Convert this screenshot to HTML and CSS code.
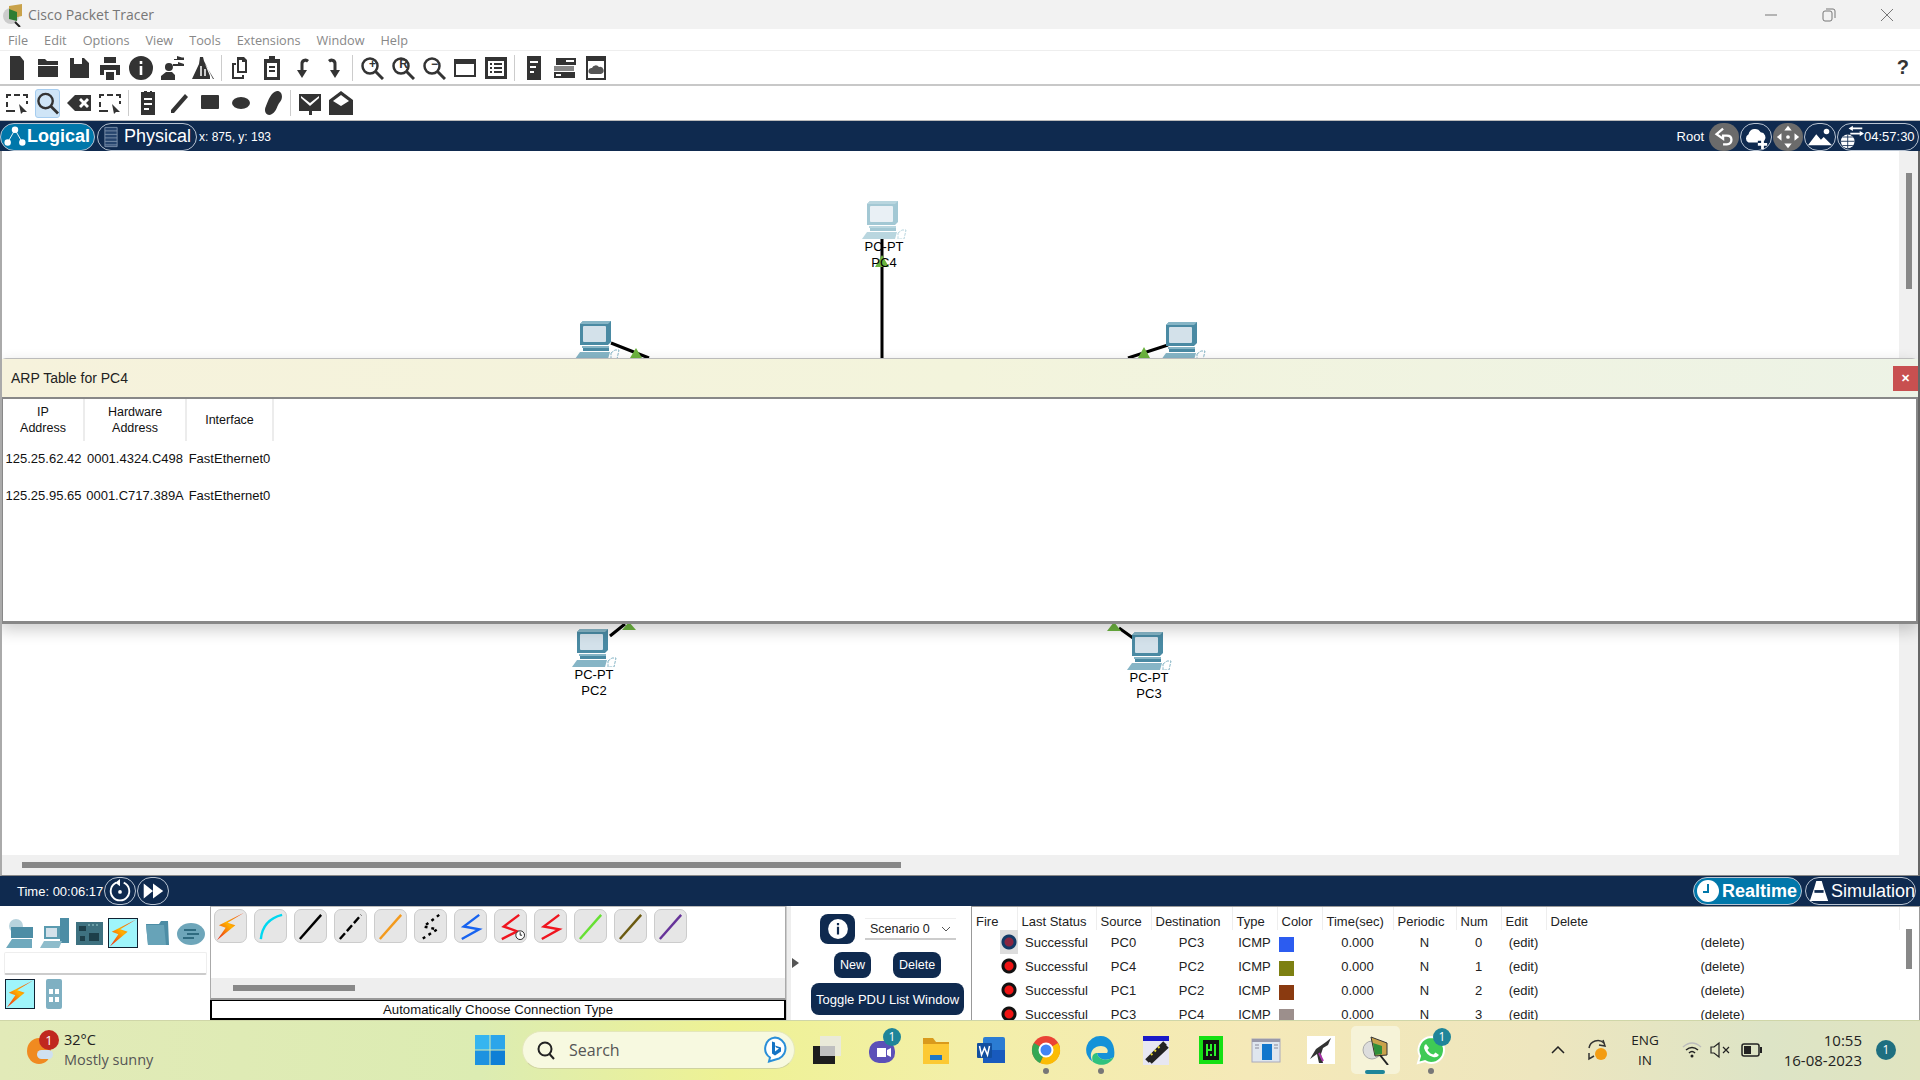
FILE: index.html
```html
<!DOCTYPE html>
<html lang="en">
<head>
    <meta charset="UTF-8">
    <title>Cisco Packet Tracer</title>
    <link rel="stylesheet" href="styles.css">
</head>
<body>
    <svg class="sprite" width="0" height="0">
        <defs>
            <linearGradient id="bolt" x1="0" y1="1" x2="1" y2="0">
                <stop offset="0" stop-color="#e8201a"/>
                <stop offset="0.5" stop-color="#ffb000"/>
                <stop offset="1" stop-color="#e8301a"/>
            </linearGradient>
            <symbol id="i-pc" viewBox="0 0 45 38">
                <path d="M5 3 8 0H36V21L33 24H5Z" fill="var(--pc-main)"/>
                <path d="M5 3 8 0H36L33 3Z" fill="var(--pc-light)"/>
                <rect x="8" y="5" width="23" height="16" rx="1" fill="var(--pc-screen)"/>
                <rect x="7" y="25" width="27" height="2" fill="var(--pc-light)"/>
                <rect x="8" y="27" width="26" height="3" fill="var(--pc-main)"/>
                <path d="M5 31H35L33 38H0Z" fill="var(--pc-light)"/>
                <path d="M36 32 40 29H44L42 38H36Z" fill="none" stroke="var(--pc-light)" stroke-dasharray="3 1"/>
            </symbol>
            <symbol id="i-bolt" viewBox="0 0 30 46" preserveAspectRatio="none">
                <path d="M29 1 12 17 20 21 1 45 10 25 3 21Z" fill="url(#bolt)"/>
            </symbol>
            <symbol id="i-new" viewBox="0 0 24 24"><path d="M5 0H15L19 5V24H5Z"/></symbol>
            <symbol id="i-open" viewBox="0 0 24 24"><path d="M2 3H9L11 5H22V9H2ZM2 10H22V21H2Z"/></symbol>
            <symbol id="i-save" viewBox="0 0 24 24"><path d="M3 2H17L22 7V22H3ZM7 2V8H15V2Z" fill-rule="evenodd"/></symbol>
            <symbol id="i-print" viewBox="0 0 24 24"><path d="M6 1H18V7H6ZM2 9H22V19H18V14H6V19H2ZM8 16H16V24H8Z"/></symbol>
            <symbol id="i-info" viewBox="0 0 24 24"><path d="M12 0A12 12 0 1 0 12 24 12 12 0 0 0 12 0ZM10.700 10H13.300V19H10.700ZM10.700 5H13.300V8H10.700Z" fill-rule="evenodd"/></symbol>
            <symbol id="i-user" viewBox="0 0 24 24"><path d="M9 7A4 4 0 1 1 8.900 15 4 4 0 0 1 9 7ZM1 24V20L6 16H12L15 19V24ZM14 3H17V0L22 1.500H24V4H14ZM13 8H18V6L24 8V10H13Z"/></symbol>
            <symbol id="i-flask" viewBox="0 0 24 24"><path d="M9 1H12L13 5 22 23H1L8 8ZM14 8 19 20V23H23Z"/><path d="M10 10V20M14 13V20" stroke="#fff" stroke-width="1.500"/></symbol>
            <symbol id="i-copy" viewBox="0 0 24 24"><path d="M8 1H15L18 4V17H8ZM10 4V15H16V6H13V4ZM3 7H7V9H5V21H13V19H15V23H3Z" fill-rule="evenodd"/></symbol>
            <symbol id="i-paste" viewBox="0 0 24 24"><path d="M9 0H15V3H20V24H4V3H9ZM7 7V21H17V7ZM9 10H15V12H9ZM9 14H15V16H9Z" fill-rule="evenodd"/></symbol>
            <symbol id="i-undo" viewBox="0 0 24 24"><path d="M6 14 11 22 16 14H12.500V8A2 2 0 0 1 16 6.500L18 4A5 5 0 0 0 9.500 8V14Z"/></symbol>
            <symbol id="i-redo" viewBox="0 0 24 24"><path d="M18 14 13 22 8 14H11.500V8A2 2 0 0 0 8 6.500L6 4A5 5 0 0 1 14.500 8V14Z"/></symbol>
            <symbol id="i-zoom" viewBox="0 0 24 24"><circle cx="10" cy="10" r="7.500" fill="none" stroke="currentColor" stroke-width="2.500"/><path d="M15.500 15.500 23 23" stroke="currentColor" stroke-width="3"/></symbol>
            <symbol id="i-window" viewBox="0 0 24 24"><path d="M1 3H23V21H1ZM3 8V19H21V8Z" fill-rule="evenodd"/></symbol>
            <symbol id="i-list" viewBox="0 0 24 24"><path d="M1 1H23V23H1ZM4 5V20H20V5ZM6 7H8V9H6ZM10 7H18V9H10ZM6 11H8V13H6ZM10 11H18V13H10ZM6 15H8V17H6ZM10 15H18V17H10Z" fill-rule="evenodd"/></symbol>
            <symbol id="i-server" viewBox="0 0 24 24"><path d="M5 0H19V24H5ZM8 5V7H16V5ZM8 10V12H14V10ZM8 15V17H12V15Z" fill-rule="evenodd"/></symbol>
            <symbol id="i-stack" viewBox="0 0 24 24"><path d="M3 2H23V9H3Z"/><path d="M1 10H21V15H1Z" fill="#888"/><path d="M1 16H22V22H1Z"/><path d="M13 4H21V6H13ZM3 18H8V20H3Z" fill="#fff"/></symbol>
            <symbol id="i-cloudbox" viewBox="0 0 24 24"><path d="M2 0H22V24H2ZM4 5V22H20V5Z" fill-rule="evenodd"/><path d="M7 18A3 3 0 0 1 8 12 4 4 0 0 1 15 11 3.500 3.500 0 0 1 17 18Z" fill="#555"/></symbol>
            <symbol id="i-select" viewBox="0 0 24 24"><path d="M1 3H6V5H3V7H1ZM9 3H15V5H9ZM18 3H23V7H21V5H18ZM1 11H3V16H1ZM21 10H23V13H21ZM1 19H10V21H1Z"/><path d="M14 13 22 21 18 21 16 23Z"/></symbol>
            <symbol id="i-erase" viewBox="0 0 24 24"><path d="M8 4H24V20H8L0 12ZM12 9 15 12 12 15 14 17 17 14 20 17 22 15 19 12 22 9 20 7 17 10 14 7Z" fill-rule="evenodd"/></symbol>
            <symbol id="i-note" viewBox="0 0 24 24"><path d="M5 1H8V0H11V1H14V0H16V1H19V24H5ZM8 7V9H16V7ZM8 12V14H16V12ZM8 17V19H13V17Z" fill-rule="evenodd"/></symbol>
            <symbol id="i-pencil" viewBox="0 0 24 24"><path d="M18 3 21 6 7 22 4 22 4 19Z"/></symbol>
            <symbol id="i-rect" viewBox="0 0 24 24"><rect x="3" y="4" width="18" height="14" rx="1"/></symbol>
            <symbol id="i-ellipse" viewBox="0 0 24 24"><ellipse cx="12" cy="12" rx="9" ry="6"/></symbol>
            <symbol id="i-free" viewBox="0 0 24 24"><path d="M17 0C23 0 23 8 20 11 17 14 17 20 12 23 7 26 3 21 6 15 8 10 11 1 17 0Z"/></symbol>
            <symbol id="i-mail" viewBox="0 0 24 24"><path d="M1 3H23V20H14V24H11V20H1ZM3 5 12 12 21 5 21 7 12 15 3 7Z" fill-rule="evenodd"/></symbol>
            <symbol id="i-mailopen" viewBox="0 0 24 24"><path d="M12 0 24 9V24H0V9ZM12 4 4 10 12 15 20 10Z" fill-rule="evenodd"/></symbol>
        </defs>
    </svg>

    <header class="titlebar">
        <svg class="app-logo" viewBox="0 0 24 24">
            <circle cx="10" cy="13" r="8" fill="#ccc"/>
            <path d="M8 3 21 1V13L8 16Z" fill="#c9a24a"/>
            <path d="M8 6 16 9V18L8 16Z" fill="#2f7d32"/>
            <path d="M14 19 19 24" stroke="#222" stroke-width="2"/>
        </svg>
        <span class="title-text">Cisco Packet Tracer</span>
        <div class="win-btns">
            <svg viewBox="0 0 14 14"><path d="M1 7H13"/></svg>
            <svg viewBox="0 0 14 14"><rect x="1" y="3" width="9" height="10" rx="2"/><path d="M4 1H11Q13 1 13 3V10"/></svg>
            <svg viewBox="0 0 14 14"><path d="M1 1 13 13M13 1 1 13"/></svg>
        </div>
    </header>

    <nav class="menubar">
        <span>File</span><span>Edit</span><span>Options</span><span>View</span><span>Tools</span><span>Extensions</span><span>Window</span><span>Help</span>
    </nav>

    <div class="toolbar toolbar-main">
        <span class="tool"><svg><use href="#i-new"/></svg></span>
        <span class="tool"><svg><use href="#i-open"/></svg></span>
        <span class="tool"><svg><use href="#i-save"/></svg></span>
        <span class="tool"><svg><use href="#i-print"/></svg></span>
        <span class="tool"><svg><use href="#i-info"/></svg></span>
        <span class="tool"><svg><use href="#i-user"/></svg></span>
        <span class="tool"><svg><use href="#i-flask"/></svg></span>
        <span class="tool-sep"></span>
        <span class="tool"><svg><use href="#i-copy"/></svg></span>
        <span class="tool"><svg><use href="#i-paste"/></svg></span>
        <span class="tool"><svg><use href="#i-undo"/></svg></span>
        <span class="tool"><svg><use href="#i-redo"/></svg></span>
        <span class="tool-sep"></span>
        <span class="tool"><svg><use href="#i-zoom"/></svg><b class="zoom-mark">+</b></span>
        <span class="tool"><svg><use href="#i-zoom"/></svg><b class="zoom-mark">R</b></span>
        <span class="tool"><svg><use href="#i-zoom"/></svg><b class="zoom-mark">&minus;</b></span>
        <span class="tool"><svg><use href="#i-window"/></svg></span>
        <span class="tool"><svg><use href="#i-list"/></svg></span>
        <span class="tool-sep"></span>
        <span class="tool"><svg><use href="#i-server"/></svg></span>
        <span class="tool"><svg><use href="#i-stack"/></svg></span>
        <span class="tool"><svg><use href="#i-cloudbox"/></svg></span>
        <span class="help-mark">?</span>
    </div>

    <div class="toolbar toolbar-draw">
        <span class="tool"><svg><use href="#i-select"/></svg></span>
        <span class="tool tool-active"><svg><use href="#i-zoom"/></svg></span>
        <span class="tool"><svg><use href="#i-erase"/></svg></span>
        <span class="tool"><svg><use href="#i-select"/></svg></span>
        <span class="tool-sep"></span>
        <span class="tool"><svg><use href="#i-note"/></svg></span>
        <span class="tool"><svg><use href="#i-pencil"/></svg></span>
        <span class="tool"><svg><use href="#i-rect"/></svg></span>
        <span class="tool"><svg><use href="#i-ellipse"/></svg></span>
        <span class="tool"><svg><use href="#i-free"/></svg></span>
        <span class="tool-sep"></span>
        <span class="tool"><svg><use href="#i-mail"/></svg></span>
        <span class="tool"><svg><use href="#i-mailopen"/></svg></span>
    </div>

    <div class="navbar navbar-top">
        <span class="pill pill-on pill-logical">
            <svg viewBox="0 0 24 24"><path d="M12 4 4 18M12 4 20 18" stroke="#fff" stroke-width="1"/><circle cx="12" cy="4" r="3.500"/><circle cx="4" cy="18" r="3.500"/><circle cx="20" cy="18" r="3.500"/></svg>
            Logical
        </span>
        <span class="pill pill-physical">
            <svg viewBox="0 0 16 24"><path d="M1 1H15V23H1ZM1 5H15M1 9H15M1 13H15M1 17H15M1 21H15" fill="#27456e" stroke="#7f93ad"/></svg>
            Physical
        </span>
        <span class="coords">x: 875, y: 193</span>
        <span class="root-label">Root</span>
        <span class="round-btn round-grey">
            <svg viewBox="0 0 30 28"><path d="M14 5 7 11 14 16V12.500H18Q23 12.500 23 17T18 22H14" fill="none" stroke="#fff" stroke-width="2.500"/></svg>
        </span>
        <span class="round-btn round-cloud">
            <svg viewBox="0 0 30 28"><path d="M7 20A5 5 0 0 1 7 11 7 7 0 0 1 20 9 5.500 5.500 0 0 1 24 18H17V20Z" fill="#fff"/><path d="M22 17V27M17 22H27" stroke="#fff" stroke-width="3"/></svg>
        </span>
        <span class="round-btn round-grey">
            <svg viewBox="0 0 30 28"><path d="M15 2 19 7H11ZM15 26 11 21H19ZM3 14 8 10V18ZM27 14 22 18V10Z" fill="#fff"/><circle cx="15" cy="14" r="2" fill="#fff"/></svg>
        </span>
        <span class="round-btn round-cloud">
            <svg viewBox="0 0 30 28"><path d="M2 23 11 11 16 17 19 14 28 23Z" fill="#fff"/><circle cx="22" cy="8" r="3" fill="#fff"/></svg>
        </span>
        <span class="clock-pill">
            <svg viewBox="0 0 28 28"><circle cx="9" cy="19" r="8" fill="#fff"/><path d="M1 19H17M9 11V27M3 14H15M3 24H15" stroke="#0f2a4f"/><path d="M13 4H26M12 10H26" stroke="#fff" stroke-width="2"/><path d="M15 1 10 4 15 7ZM23 7 28 10 23 13Z" fill="#fff"/></svg>
            04:57:30
        </span>
    </div>

    <main class="workspace">
        <svg class="links" viewBox="0 151 1920 724">
            <path d="M882 238V358M611 343 649 358M1168 345 1128 358M610 636 625 624M1119 628 1133 638" stroke="#000" stroke-width="3" fill="none"/>
            <path d="M882 255 889 267H875ZM636 348 642 358H630ZM1144 347 1150 358H1138ZM629 622 636 630H622ZM1114 622 1121 631H1107Z" fill="#6cb33f"/>
        </svg>
        <div class="node node-pc4 node-faded"><svg class="pc-icon"><use href="#i-pc"/></svg><span>PC-PT</span><span>PC4</span></div>
        <div class="node node-pc0"><svg class="pc-icon"><use href="#i-pc"/></svg><span>PC-PT</span><span>PC0</span></div>
        <div class="node node-pc1"><svg class="pc-icon"><use href="#i-pc"/></svg><span>PC-PT</span><span>PC1</span></div>
        <div class="node node-pc2"><svg class="pc-icon"><use href="#i-pc"/></svg><span>PC-PT</span><span>PC2</span></div>
        <div class="node node-pc3"><svg class="pc-icon"><use href="#i-pc"/></svg><span>PC-PT</span><span>PC3</span></div>

        <div class="vscroll"><span class="vscroll-thumb"></span></div>
        <div class="hscroll"><span class="hscroll-thumb"></span></div>

        <section class="arp-window">
            <div class="arp-title">
                <span>ARP Table for PC4</span>
                <button class="arp-close">&#10005;</button>
            </div>
            <div class="arp-body">
                <table class="arp-table">
                    <thead>
                        <tr><th class="col-ip">IP<br>Address</th><th class="col-hw">Hardware<br>Address</th><th class="col-if">Interface</th></tr>
                    </thead>
                    <tbody>
                        <tr><td>125.25.62.42</td><td>0001.4324.C498</td><td>FastEthernet0</td></tr>
                        <tr><td>125.25.95.65</td><td>0001.C717.389A</td><td>FastEthernet0</td></tr>
                    </tbody>
                </table>
            </div>
        </section>
    </main>

    <div class="navbar navbar-time">
        <span class="time-text">Time: 00:06:17</span>
        <span class="round-btn round-cloud">
            <svg viewBox="0 0 30 28"><path d="M11 5A10 10 0 1 0 19 5" fill="none" stroke="#fff" stroke-width="2"/><path d="M15 1 10 5 15 9Z" fill="#fff"/><circle cx="15" cy="15" r="2" fill="#fff"/></svg>
        </span>
        <span class="round-btn round-cloud">
            <svg viewBox="0 0 30 28"><path d="M5 6 15 14 5 22ZM15 6 26 14 15 22Z" fill="#fff"/></svg>
        </span>
        <span class="pill pill-on pill-realtime">
            <svg viewBox="0 0 24 24"><circle cx="12" cy="12" r="11" fill="#fff"/><path d="M12 5V13H7" stroke="#0077aa" stroke-width="2" fill="none"/></svg>
            Realtime
        </span>
        <span class="pill pill-simulation">
            <svg viewBox="0 0 24 24"><path d="M9 1H15L17 8 22 23H2L7 8Z" fill="#fff"/><rect x="7" y="11" width="10" height="3" fill="#0f2a4f"/></svg>
            Simulation
        </span>
    </div>

    <div class="bottom">
        <div class="dev-panel">
            <div class="dev-types">
                <svg class="dev-icon" viewBox="0 0 30 30"><circle cx="10" cy="8" r="7" fill="#b8d3dd"/><rect x="5" y="9" width="22" height="11" fill="#4d8da5"/><path d="M0 30 6 21H26V30Z" fill="#6fa9bd"/></svg>
                <svg class="dev-icon" viewBox="0 0 30 30"><rect x="4" y="8" width="16" height="13" fill="#5b9bb0"/><rect x="6" y="10" width="11" height="9" fill="#d3e1ea"/><rect x="20" y="0" width="9" height="25" fill="#4d8da5"/><path d="M0 30 4 23H22L19 30Z" fill="#8ebccb"/></svg>
                <svg class="dev-icon" viewBox="0 0 30 30"><rect x="2" y="4" width="27" height="23" fill="#3e7180"/><path d="M5 8H12V13H5ZM15 15H25V23H15ZM6 18H11V23H6Z" fill="#1d3f4a"/><path d="M14 7H26" stroke="#9cc" stroke-dasharray="2 2"/></svg>
                <span class="dev-selected"><svg><use href="#i-bolt"/></svg></span>
                <svg class="dev-icon" viewBox="0 0 30 30"><path d="M4 6H17L19 3H26L27 27H6Z" fill="#4d8da5"/><path d="M4 7H22L24 27H6Z" fill="#67a3b8"/></svg>
                <svg class="dev-icon" viewBox="0 0 30 30"><ellipse cx="15" cy="16" rx="14" ry="11" fill="#6ea6ba"/><path d="M8 12H20M11 16H23M7 20H18" stroke="#2f6b80" stroke-width="2"/></svg>
            </div>
            <div class="dev-search"></div>
            <div class="dev-subtypes">
                <span class="dev-selected dev-selected-sub"><svg><use href="#i-bolt"/></svg></span>
                <svg class="dev-grid" viewBox="0 0 16 30"><rect width="16" height="30" rx="2" fill="#7fb0c2"/><path d="M3 10H7V15H3ZM9 10H13V15H9ZM3 18H7V23H3ZM9 18H13V23H9Z" fill="#fff"/></svg>
            </div>
        </div>

        <div class="cable-panel">
            <div class="cable-list">
                <div class="cable-row">
                    <span class="cable"><svg><use href="#i-bolt"/></svg></span>
                    <span class="cable"><svg viewBox="0 0 30 30"><path d="M5 28Q7 8 27 3" class="wire wire-console"/></svg></span>
                    <span class="cable"><svg viewBox="0 0 30 30"><path d="M4 28 26 3" class="wire wire-black"/></svg></span>
                    <span class="cable"><svg viewBox="0 0 30 30"><path d="M4 28 26 3" class="wire wire-black wire-dash"/></svg></span>
                    <span class="cable"><svg viewBox="0 0 30 30"><path d="M4 28 26 3" class="wire wire-orange"/></svg></span>
                    <span class="cable"><svg viewBox="0 0 30 30"><path d="M24 3 8 15 22 18 6 28" class="wire wire-black wire-dots"/></svg></span>
                    <span class="cable"><svg viewBox="0 0 30 30"><path d="M24 3 8 15 24 18 6 28" class="wire wire-blue"/></svg></span>
                    <span class="cable"><svg viewBox="0 0 30 30"><path d="M24 3 8 15 22 20 6 28" class="wire wire-red"/><circle cx="25" cy="24" r="4.500" fill="#fff" stroke="#222"/><path d="M25 21V24H27" stroke="#222" fill="none"/></svg></span>
                    <span class="cable"><svg viewBox="0 0 30 30"><path d="M24 3 8 15 24 18 6 28" class="wire wire-red"/></svg></span>
                    <span class="cable"><svg viewBox="0 0 30 30"><path d="M4 28 26 3" class="wire wire-green"/></svg></span>
                    <span class="cable"><svg viewBox="0 0 30 30"><path d="M4 28 26 3" class="wire wire-olive"/></svg></span>
                    <span class="cable"><svg viewBox="0 0 30 30"><path d="M4 28 26 3" class="wire wire-purple"/></svg></span>
                </div>
                <div class="cable-scroll"><span class="cable-thumb"></span></div>
            </div>
            <div class="cable-label">Automatically Choose Connection Type</div>
        </div>

        <div class="splitter"><span class="splitter-arrow"></span></div>

        <div class="scenario">
            <div class="scenario-top">
                <span class="info-btn"><svg viewBox="0 0 20 20"><circle cx="10" cy="10" r="9" fill="#fff"/><path d="M9 8H11V15H9ZM9 4.500H11V6.500H9Z" fill="#0f2a4f"/></svg></span>
                <span class="scenario-select">Scenario 0 <svg viewBox="0 0 10 6"><path d="M1 1 5 5 9 1" fill="none" stroke="#555"/></svg></span>
            </div>
            <div class="scenario-btns">
                <span class="dark-btn">New</span>
                <span class="dark-btn">Delete</span>
            </div>
            <span class="dark-btn toggle-btn">Toggle PDU List Window</span>
        </div>

        <div class="pdu-panel">
            <table class="pdu-table">
                <colgroup>
                    <col class="c-fire"><col class="c-status"><col class="c-src"><col class="c-dst"><col class="c-type"><col class="c-color"><col class="c-time"><col class="c-per"><col class="c-num"><col class="c-edit"><col class="c-del">
                </colgroup>
                <thead>
                    <tr><th>Fire</th><th>Last Status</th><th>Source</th><th>Destination</th><th>Type</th><th>Color</th><th>Time(sec)</th><th>Periodic</th><th>Num</th><th>Edit</th><th>Delete</th></tr>
                </thead>
                <tbody>
                    <tr><td class="fire-cell"><span class="fire fire-off"></span></td><td>Successful</td><td>PC0</td><td>PC3</td><td>ICMP</td><td><span class="swatch swatch-blue"></span></td><td>0.000</td><td>N</td><td>0</td><td>(edit)</td><td>(delete)</td></tr>
                    <tr><td class="fire-cell"><span class="fire"></span></td><td>Successful</td><td>PC4</td><td>PC2</td><td>ICMP</td><td><span class="swatch swatch-olive"></span></td><td>0.000</td><td>N</td><td>1</td><td>(edit)</td><td>(delete)</td></tr>
                    <tr><td class="fire-cell"><span class="fire"></span></td><td>Successful</td><td>PC1</td><td>PC2</td><td>ICMP</td><td><span class="swatch swatch-brown"></span></td><td>0.000</td><td>N</td><td>2</td><td>(edit)</td><td>(delete)</td></tr>
                    <tr><td class="fire-cell"><span class="fire"></span></td><td>Successful</td><td>PC3</td><td>PC4</td><td>ICMP</td><td><span class="swatch swatch-grey"></span></td><td>0.000</td><td>N</td><td>3</td><td>(edit)</td><td>(delete)</td></tr>
                </tbody>
            </table>
            <span class="pdu-scroll"></span>
        </div>
    </div>

    <footer class="taskbar">
        <div class="weather">
            <span class="weather-icon">
                <span class="sun"></span>
                <span class="cloud"></span>
                <span class="badge badge-red">1</span>
            </span>
            <span class="weather-text"><span class="temp">32°C</span><span class="cond">Mostly sunny</span></span>
        </div>
        <svg class="start" viewBox="0 0 30 30">
            <path d="M0 0H14.500V14.500H0Z" fill="#35b5f0"/><path d="M15.500 0H30V14.500H15.500Z" fill="#2ba5ea"/>
            <path d="M0 15.500H14.500V30H0Z" fill="#1d92e0"/><path d="M15.500 15.500H30V30H15.500Z" fill="#0e7fd6"/>
        </svg>
        <div class="search">
            <svg class="search-icon" viewBox="0 0 20 20"><circle cx="9" cy="9" r="6.500" fill="none" stroke="#222" stroke-width="2"/><path d="M13.500 14 18 19" stroke="#222" stroke-width="2"/></svg>
            <span class="search-text">Search</span>
            <svg class="bing" viewBox="0 0 24 26"><path d="M12 1A11 11 0 0 1 16 22L6 25 7 21A11 11 0 0 1 12 1Z" fill="#fff" stroke="#2a8fd8" stroke-width="2"/><path d="M9 5 12 6V15L16 12 13 11 12 9 18 11V15L12 19 9 17Z" fill="#1272c4"/></svg>
        </div>

        <span class="task">
            <svg viewBox="0 0 30 30"><rect x="2" y="11" width="22" height="18" fill="#1d1d1d"/><rect x="9" y="1" width="21" height="20" fill="#e8e8e8" opacity="0.8"/></svg>
        </span>
        <span class="task">
            <svg viewBox="0 0 30 30"><rect x="3" y="6" width="26" height="22" rx="10" fill="#5b50b8"/><path d="M11 13H20V22H11ZM21 15 25 13V22L21 20Z" fill="#fff"/></svg>
            <span class="badge badge-teal">1</span>
        </span>
        <span class="task">
            <svg viewBox="0 0 30 30"><path d="M2 3H12L15 7H28V14H2Z" fill="#d99a1c"/><rect x="2" y="9" width="26" height="20" fill="#fcc934"/><rect x="9" y="20" width="12" height="5" fill="#1f78c8"/></svg>
        </span>
        <span class="task">
            <svg viewBox="0 0 30 30"><rect x="7" y="2" width="22" height="26" rx="2" fill="#2b7cd3"/><rect x="7" y="15" width="22" height="13" fill="#185abd"/><rect x="1" y="8" width="15" height="15" rx="1" fill="#124f9f"/><path d="M3.500 11 5.500 20 8.500 13 11.500 20 13.500 11" fill="none" stroke="#fff" stroke-width="1.500"/></svg>
        </span>
        <span class="task task-dot">
            <svg viewBox="0 0 30 30"><circle cx="15" cy="15" r="14" fill="#ea4335"/><path d="M15 15 27 8A14 14 0 0 1 9 28Z" fill="#fbbc05"/><path d="M15 15 9 28A14 14 0 0 1 3 8Z" fill="#34a853"/><circle cx="15" cy="15" r="6.500" fill="#4285f4" stroke="#fff" stroke-width="2"/></svg>
        </span>
        <span class="task task-dot">
            <svg viewBox="0 0 30 30"><path d="M15 1A14 14 0 0 0 7 27C2 20 6 11 15 11 21 11 23 16 21 18H11C12 25 21 27 28 22 30 10 24 1 15 1Z" fill="#1592d8"/><path d="M7 27A14 14 0 0 0 28 22C21 27 12 25 11 18 7 18 5 22 7 27Z" fill="#2fc27e"/></svg>
        </span>
        <span class="task">
            <svg viewBox="0 0 30 30"><rect x="2" y="1" width="26" height="29" fill="#e7e7f2"/><rect x="2" y="1" width="26" height="5" fill="#1a1ac8"/><path d="M6 26 24 8M9 27 26 11" stroke="#222" stroke-width="5"/><path d="M10 20 20 10" stroke="#e8d830" stroke-width="2" stroke-dasharray="2 3"/></svg>
        </span>
        <span class="task">
            <svg viewBox="0 0 30 30"><rect x="3" y="1" width="24" height="28" fill="#14e014"/><rect x="7" y="5" width="16" height="20" fill="#111"/><path d="M11 9V21M15 9V16M15 19V21M19 9V21M11 15H15" stroke="#2cf02c" stroke-width="2"/></svg>
        </span>
        <span class="task">
            <svg viewBox="0 0 30 30"><rect x="1" y="4" width="28" height="23" fill="#dfe6ee" stroke="#aab"/><rect x="1" y="4" width="28" height="3" fill="#99a"/><rect x="11" y="9" width="10" height="16" fill="#1176cc"/><path d="M4 10H8M4 13H8M23 10H27M23 13H27" stroke="#889"/></svg>
        </span>
        <span class="task">
            <svg viewBox="0 0 30 30"><rect x="1" y="1" width="28" height="28" fill="#fff"/><path d="M4 24 10 14 20 7 25 3 22 10 17 13 15 19 17 28 13 28 11 19Z" fill="#333"/><path d="M13 18 17 26" stroke="#a3a" stroke-width="2"/></svg>
        </span>
        <span class="task task-active">
            <svg viewBox="0 0 30 30"><circle cx="11" cy="15" r="9" fill="#ddd" stroke="#aaa"/><path d="M10 2 26 8V20L14 21Z" fill="#c9a24a" stroke="#333"/><path d="M12 8 21 11V19L14 20Z" fill="#2f8f3a"/><path d="M19 20 27 30" stroke="#222" stroke-width="2"/></svg>
        </span>
        <span class="task task-dot">
            <svg viewBox="0 0 30 30"><path d="M15 2A13 13 0 0 1 15 28 13 13 0 0 1 9 26L2 28 4 21A13 13 0 0 1 15 2Z" fill="#3fca55" stroke="#fff" stroke-width="2"/><path d="M10 9 13 13 11.500 15Q14 19 17.500 19.500L19.500 17.500 23 20Q21 23 17 22 10 20 8 13 8 10 10 9Z" fill="#fff"/></svg>
            <span class="badge badge-teal">1</span>
        </span>

        <div class="tray">
            <svg class="tray-chevron" viewBox="0 0 14 8"><path d="M1 7 7 1 13 7" fill="none" stroke="#222" stroke-width="1.500"/></svg>
            <svg class="tray-sync" viewBox="0 0 24 26"><path d="M4 11A9 9 0 0 1 19 6" fill="none" stroke="#333" stroke-width="1.500"/><path d="M4 16 4 22 9 19M18 3 20 9 14 8" fill="none" stroke="#333" stroke-width="1.500"/><circle cx="16" cy="17" r="6" fill="#f39c12"/></svg>
            <span class="lang">ENG<br>IN</span>
            <svg class="tray-wifi" viewBox="0 0 20 18"><path d="M1 6Q10-2 19 6" fill="none" stroke="#bbb" stroke-width="1.500"/><path d="M4 9Q10 4 16 9M7 12Q10 9 13 12" fill="none" stroke="#222" stroke-width="1.500"/><circle cx="10" cy="15" r="1.500" fill="#222"/></svg>
            <svg class="tray-vol" viewBox="0 0 22 18"><path d="M1 6H4L9 2V16L4 12H1Z" fill="none" stroke="#222" stroke-width="1.200"/><path d="M13 6 19 12M19 6 13 12" stroke="#222" stroke-width="1.200"/></svg>
            <svg class="tray-bat" viewBox="0 0 22 14"><rect x="1" y="1" width="17" height="12" rx="2" fill="none" stroke="#222" stroke-width="1.500"/><rect x="3" y="3" width="7" height="8" fill="#222"/><rect x="19" y="4" width="2" height="6" fill="#222"/></svg>
            <span class="clock">10:55<br>16-08-2023</span>
            <span class="notif">1</span>
        </div>
    </footer>
</body>
</html>
```

FILE: styles.css
```css
* { box-sizing: border-box; }
html, body { margin: 0; padding: 0; }
body { width: 1920px; height: 1080px; overflow: hidden; display: flex; flex-direction: column; background: #fff; font-family: 'Liberation Sans', Arial, sans-serif; color: #000; }
.sprite { display: block; height: 0; }

/* window chrome */
.titlebar { height: 29px; flex: none; display: flex; align-items: center; background: #f2f2f2; color: #777; font-family: 'Open Sans', sans-serif; font-size: 14px; }
.app-logo { width: 24px; height: 24px; margin-left: 1px; margin-right: 3px; }
.win-btns { margin-left: auto; display: flex; gap: 44px; margin-right: 26px; }
.win-btns svg { width: 14px; height: 14px; fill: none; stroke: #777; stroke-width: 1; }
.menubar { height: 22px; flex: none; display: flex; align-items: center; gap: 16px; padding-left: 8px; border-bottom: 1px solid #eee; color: #888; font-family: 'Open Sans', sans-serif; font-size: 12.700px; }

.toolbar { flex: none; display: flex; align-items: center; padding-left: 1px; color: #333; fill: #333; border-bottom: 2px solid #c8c8c8; }
.toolbar-main { height: 35px; }
.toolbar-draw { height: 34px; border-bottom: 0; }
.tool { position: relative; width: 31px; height: 29px; display: flex; align-items: center; justify-content: center; flex: none; }
.tool svg { width: 24px; height: 24px; }
.tool-active { background: #cfe5f7; border: 1px solid #a6cdf0; border-radius: 3px; width: 25px; margin: 0 3px; }
.tool-sep { width: 7px; height: 26px; flex: none; background: linear-gradient(#ccc, #ccc) center / 1px 100% no-repeat; }
.zoom-mark { position: absolute; left: 9px; top: 3px; width: 15px; text-align: center; font-size: 12px; line-height: 16px; }
.help-mark { margin-left: auto; margin-right: 11px; font-size: 20px; font-weight: bold; color: #333; }

/* navy bars */
.navbar { flex: none; display: flex; align-items: center; background: #0f2a4f; color: #fff; }
.navbar-top { height: 31px; padding-top: 1px; border-top: 1px solid #bbb; }
.navbar-time { height: 30px; }
.pill { display: flex; align-items: center; height: 28px; border-radius: 14px; border: 1px solid #b9c4d2; font-size: 18px; fill: #fff; }
.pill svg { flex: none; }
.pill-on { background: #0077aa; }
.pill-logical { width: 95px; font-weight: bold; padding-left: 3px; gap: 1px; }
.pill-logical svg { width: 22px; height: 24px; }
.pill-physical { width: 100px; margin-left: 2px; padding-left: 6px; gap: 6px; }
.pill-physical svg { width: 14px; height: 24px; }
.coords { margin-left: 2px; font-size: 12px; }
.root-label { margin-left: auto; font-size: 13px; margin-right: 5px; }
.round-btn { width: 32px; height: 28px; flex: none; display: flex; align-items: center; justify-content: center; border-radius: 14px; margin-right: 1px; }
.round-btn svg { width: 28px; height: 26px; }
.round-grey { background: #6b6b6b; width: 30px; }
.round-cloud { border: 1px solid #b9c4d2; }
.clock-pill { width: 82px; height: 28px; display: flex; align-items: center; gap: 0; margin-right: 1px; padding-left: 2px; border: 1px solid #b9c4d2; border-radius: 14px; font-size: 13px; }
.clock-pill svg { width: 24px; height: 24px; flex: none; }

.time-text { margin-left: 17px; font-size: 13px; width: 87px; white-space: nowrap; }
.pill-realtime { margin-left: auto; width: 109px; padding-left: 2px; gap: 2px; font-weight: bold; }
.pill-realtime svg { width: 24px; height: 24px; }
.pill-simulation { width: 111px; margin-left: 3px; margin-right: 4px; padding-left: 2px; gap: 1px; }
.pill-simulation svg { width: 22px; height: 24px; }

/* workspace canvas */
.workspace { position: relative; height: 725px; flex: none; overflow: hidden; border-left: 2px solid #aaa; border-right: 2px solid #666; border-bottom: 1px solid #888; }
.links { position: absolute; left: -2px; top: 0; width: 1920px; height: 724px; }
.node { position: absolute; width: 60px; display: flex; flex-direction: column; align-items: center; font-size: 13px; line-height: 16px; --pc-main: #4a8aa3; --pc-light: #86b5c6; --pc-screen: #d3e1ea; }
.node-faded { --pc-main: #a3c8d4; --pc-light: #b9d6df; --pc-screen: #e9f0f5; }
.pc-icon { width: 45px; height: 38px; flex: none; }
.node-pc4 { left: 852px; top: 50px; }
.node-pc0 { left: 565px; top: 170px; }
.node-pc1 { left: 1151px; top: 171px; }
.node-pc2 { left: 562px; top: 478px; }
.node-pc3 { left: 1117px; top: 481px; }

.vscroll { position: absolute; right: 0; top: 0; width: 19px; bottom: 0; background: #f0f0f0; }
.vscroll-thumb { position: absolute; left: 7px; top: 22px; width: 6px; height: 116px; background: #888; }
.hscroll { position: absolute; left: 0; right: 19px; bottom: 0; height: 20px; background: #f0f0f0; }
.hscroll-thumb { position: absolute; left: 20px; top: 7px; width: 879px; height: 6px; background: #888; }

/* ARP table window */
.arp-window { position: absolute; left: -2px; top: 207px; width: 1918px; height: 266px; display: flex; flex-direction: column; background: #fff; border-radius: 6px 6px 0 0; box-shadow: 0 6px 16px rgba(0,0,0,0.2); border-top: 1px solid #bbb; }
.arp-title { height: 38px; flex: none; display: flex; align-items: center; justify-content: space-between; padding-left: 11px; font-size: 14px; color: #222; background: linear-gradient(90deg, #f6f2dc 0%, #f3f4dc 50%, #edf3e6 100%); }
.arp-close { width: 25px; height: 25px; padding: 0; border: 0; background: #c85050; color: #fff; font-size: 11px; font-weight: bold; }
.arp-body { flex: 1; margin-left: 1px; border: 2px solid #888; border-bottom-width: 3px; background: #fff; }
.arp-table { border-collapse: collapse; table-layout: fixed; font-size: 13px; color: #111; }
.arp-table th { height: 42px; font-weight: normal; font-size: 12.500px; line-height: 16px; border-right: 2px solid #ececec; padding: 0; }
.arp-table td { height: 37px; text-align: center; padding: 0 0 3px; white-space: nowrap; }
.col-ip { width: 81px; }
.col-hw { width: 102px; }
.col-if { width: 87px; }

/* bottom panels */
.bottom { height: 114px; flex: none; display: flex; overflow: hidden; background: #fff; }
.dev-panel { width: 210px; flex: none; padding-left: 4px; }
.dev-types { height: 45px; display: flex; align-items: center; padding-top: 9px; margin-left: 2px; gap: 4px; }
.dev-icon { width: 30px; height: 30px; flex: none; }
.dev-selected { width: 30px; height: 30px; flex: none; display: block; background: #9ff5fb; border: 1px solid #123; }
.dev-selected svg { width: 100%; height: 100%; display: block; }
.dev-search { width: 203px; height: 23px; margin-top: 1px; border: 1px solid #eee; border-bottom: 2px solid #ccc; border-radius: 2px; }
.dev-subtypes { display: flex; align-items: center; gap: 11px; margin-top: 4px; margin-left: 1px; }
.dev-grid { width: 16px; height: 30px; }

.cable-panel { width: 576px; flex: none; display: flex; flex-direction: column; }
.cable-list { height: 94px; display: flex; flex-direction: column; justify-content: space-between; border-left: 1px solid #aaa; border-right: 1px solid #aaa; border-top: 1px solid #bbb; border-bottom: 2px solid #999; }
.cable-row { display: flex; gap: 7px; padding: 2px 0 0 3px; }
.cable { width: 33px; height: 34px; flex: none; display: flex; align-items: center; justify-content: center; background: #e6e6e6; border: 1px solid #ccc; border-radius: 7px; }
.cable svg { width: 29px; height: 29px; }
.wire { fill: none; stroke-width: 2.500; }
.wire-console { stroke: #00d8f0; }
.wire-black { stroke: #000; }
.wire-dash { stroke-dasharray: 8 3; }
.wire-dots { stroke-dasharray: 3 4; }
.wire-orange { stroke: #f39a1d; }
.wire-blue { stroke: #1763f0; }
.wire-red { stroke: #f0141e; }
.wire-green { stroke: #66e033; }
.wire-olive { stroke: #6b5a10; }
.wire-purple { stroke: #663399; }
.cable-scroll { height: 20px; background: #eee; padding: 7px 0 0 22px; }
.cable-thumb { display: block; width: 122px; height: 6px; background: #888; }
.cable-label { height: 20px; border: 2px solid #000; border-top-width: 1px; text-align: center; font-size: 13.200px; line-height: 18px; color: #111; }

.splitter { width: 14px; flex: none; display: flex; align-items: center; justify-content: flex-end; padding-right: 1px; border-left: 1px solid #ccc; background: linear-gradient(90deg, #eee 0 4px, #fff 4px); }
.splitter-arrow { border-left: 7px solid #555; border-top: 5px solid transparent; border-bottom: 5px solid transparent; }

.scenario { width: 171px; flex: none; display: flex; flex-direction: column; padding: 8px 0 0 11px; font-size: 13px; }
.scenario-top { display: flex; align-items: center; gap: 10px; padding-left: 9px; height: 30px; }
.info-btn { width: 35px; height: 30px; display: flex; align-items: center; justify-content: center; background: #0f2a4f; border-radius: 8px; }
.info-btn svg { width: 22px; height: 22px; }
.scenario-select { width: 91px; height: 22px; display: flex; align-items: center; justify-content: space-between; padding: 0 5px; font-size: 12.500px; color: #222; border-bottom: 2px solid #ccc; border-top: 1px solid #eee; }
.scenario-select svg { width: 10px; height: 6px; }
.scenario-btns { display: flex; gap: 22px; margin: 8px 0 5px 23px; }
.dark-btn { height: 26px; display: flex; align-items: center; justify-content: center; padding: 0 6px; background: #0f2a4f; color: #fff; border-radius: 8px; font-size: 12.500px; }
.toggle-btn { width: 153px; height: 32px; padding: 0; font-size: 13px; }

.pdu-panel { position: relative; flex: 1; overflow: hidden; border: 1px solid #999; border-bottom: 0; }
.pdu-table { border-collapse: collapse; table-layout: fixed; width: 927px; font-size: 13px; color: #222; }
.pdu-table th { height: 23px; padding: 7px 0 0 4px; line-height: 15px; font-weight: normal; text-align: left; vertical-align: top; border-right: 1px solid #eee; white-space: nowrap; overflow: hidden; }
.pdu-table td { height: 24px; padding: 0; text-align: center; white-space: nowrap; }
.c-fire { width: 45px; }
.c-status { width: 79px; }
.c-src { width: 55px; }
.c-dst { width: 81px; }
.c-type { width: 45px; }
.c-color { width: 45px; }
.c-time { width: 71px; }
.c-per { width: 63px; }
.c-num { width: 45px; }
.c-edit { width: 45px; }
.c-del { width: 353px; }
.pdu-table .fire-cell { text-align: right; }
.fire { display: inline-block; vertical-align: middle; width: 18px; height: 24px; margin-right: -1px; background: radial-gradient(circle at 50% 50%, #f01414 0 4px, #111 5px 7px, transparent 8px); }
.fire-off { background: radial-gradient(circle at 50% 50%, #8a2540 0 4px, #123a66 5px 7px, transparent 8px), #ddd; }
.swatch { display: inline-block; vertical-align: middle; width: 15px; height: 15px; margin: 4px 26px 0 0; }
.swatch-blue { background: #2c5cf0; }
.swatch-olive { background: #7d8012; }
.swatch-brown { background: #8a3a10; }
.swatch-grey { background: #9c8f8c; }
.pdu-scroll { position: absolute; right: 7px; top: 22px; width: 6px; height: 40px; background: #888; }

/* taskbar */
.taskbar { height: 60px; flex: none; display: flex; align-items: center; padding-left: 40px; padding-bottom: 2px; background: linear-gradient(90deg, #e2eab8 0%, #dcecb2 25%, #eef294 38%, #f3efa8 50%, #f5e9b8 65%, #eee6be 80%, #dde4c6 92%, #e0e4c0 100%); border-top: 1px solid #cfd6a8; }
.weather { width: 455px; flex: none; display: flex; align-items: center; gap: 4px; margin-left: -20px; }
.weather-icon { position: relative; width: 40px; height: 40px; flex: none; }
.sun { position: absolute; left: 7px; top: 8px; width: 24px; height: 26px; border-radius: 50%; background: #f08a20; }
.cloud { position: absolute; left: 17px; top: 20px; width: 16px; height: 9px; border-radius: 5px; background: #cfe0f0; }
.badge { position: absolute; display: flex; align-items: center; justify-content: center; border-radius: 50%; color: #fff; font-size: 13px; font-family: 'Open Sans', sans-serif; }
.badge-red { left: 19px; top: 0; width: 20px; height: 20px; background: #c0281f; }
.badge-teal { left: 30px; top: 2px; width: 18px; height: 18px; background: #1f8599; font-size: 12px; }
.weather-text { display: flex; flex-direction: column; font-family: 'Open Sans', sans-serif; font-size: 14.500px; line-height: 20px; }
.temp { color: #222; }
.cond { color: #555; }
.start { width: 30px; height: 30px; flex: none; }
.search { width: 273px; height: 38px; flex: none; margin-left: 17px; display: flex; align-items: center; padding-left: 13px; background: #f7f9e0; border: 1px solid #e4e7bb; border-bottom-color: #cfd3a0; border-radius: 19px; }
.search-icon { width: 20px; height: 20px; }
.search-text { margin-left: 13px; font-family: 'Open Sans', sans-serif; font-size: 16px; color: #555; }
.bing { width: 24px; height: 27px; margin-left: auto; margin-right: 7px; }
.task { position: relative; width: 55px; height: 48px; flex: none; display: flex; align-items: center; justify-content: center; }
.search + .task { margin-left: 3px; }
.task svg { width: 30px; height: 30px; }
.task-dot::after { content: ""; position: absolute; left: 25px; bottom: 0; width: 6px; height: 6px; border-radius: 50%; background: #777; }
.task-active { background: #f6f3d8; border-radius: 5px; width: 49px; margin: 0 3px; }
.task-active::after { content: ""; position: absolute; left: 14px; bottom: 0; width: 20px; height: 4px; border-radius: 2px; background: #1f8599; }
.tray { flex: 1; display: flex; align-items: center; font-family: 'Open Sans', sans-serif; color: #222; font-size: 13.500px; line-height: 20px; }
.tray-chevron { width: 14px; height: 8px; margin-left: 93px; }
.tray-sync { width: 24px; height: 26px; margin-left: 20px; }
.lang { width: 50px; margin-left: 11px; text-align: center; }
.tray-wifi { width: 20px; height: 18px; margin-left: 12px; }
.tray-vol { width: 22px; height: 18px; margin-left: 8px; }
.tray-bat { width: 22px; height: 14px; margin-left: 9px; }
.clock { width: 93px; margin-left: 6px; text-align: right; font-size: 15px; }
.notif { width: 20px; height: 20px; margin-left: 14px; display: flex; align-items: center; justify-content: center; border-radius: 50%; background: #1f6f80; color: #fff; font-size: 12px; }
```
